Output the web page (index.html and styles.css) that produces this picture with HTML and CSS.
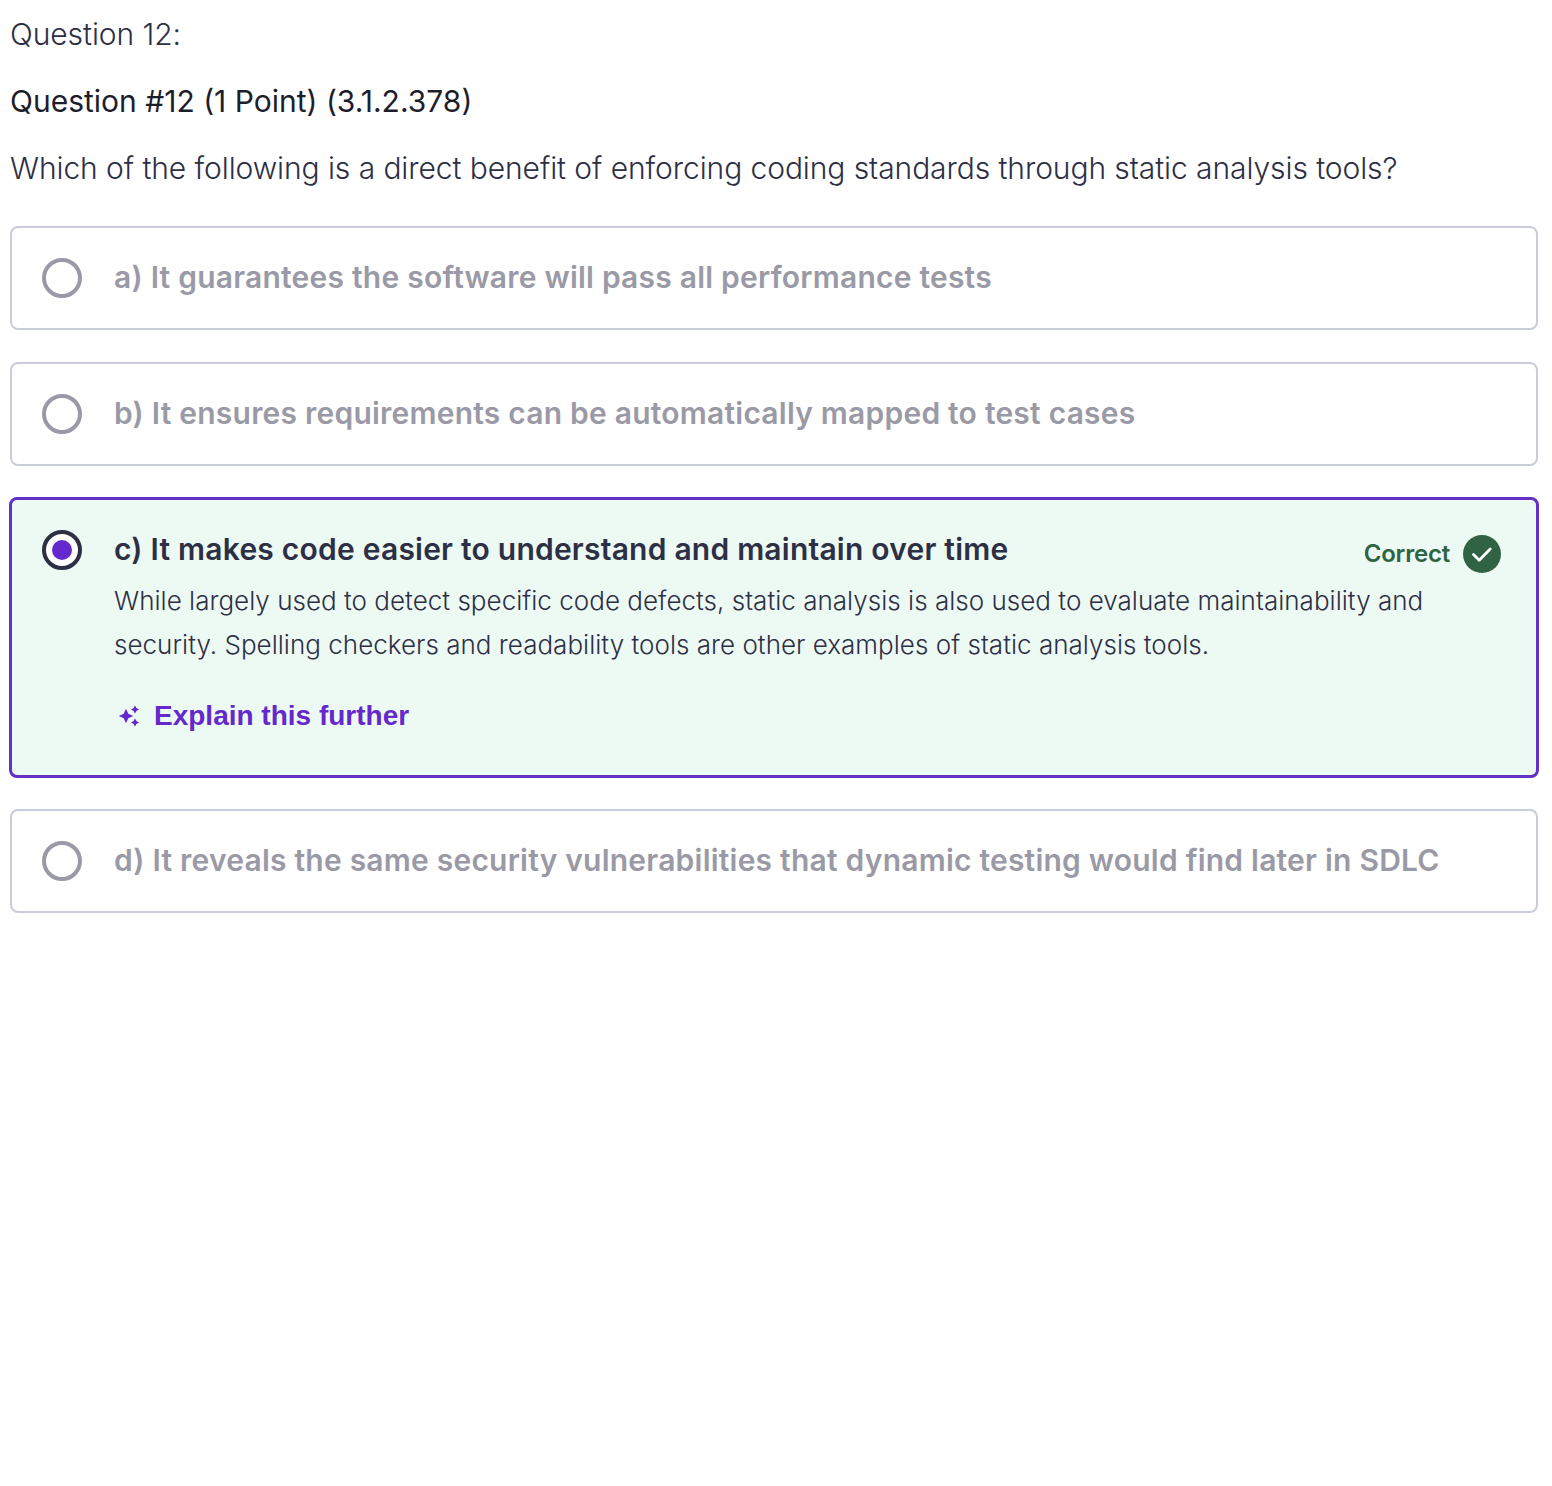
FILE: index.html
```html
<!DOCTYPE html>
<html lang="en">
<head>
<meta charset="utf-8">
<title>Question 12</title>
<link rel="stylesheet" href="styles.css">
</head>
<body>
<main class="quiz">
  <p class="label">Question 12:</p>
  <p class="meta">Question #12 (1 Point) (3.1.2.378)</p>
  <p class="prompt">Which of the following is a direct benefit of enforcing coding standards through static analysis tools?</p>
  <ul class="options">
    <li class="option">
      <span class="radio"></span>
      <span class="option-text muted">a) It guarantees the software will pass all performance tests</span>
    </li>
    <li class="option">
      <span class="radio"></span>
      <span class="option-text muted">b) It ensures requirements can be automatically mapped to test cases</span>
    </li>
    <li class="option option-selected">
      <span class="radio radio-selected"><span class="radio-dot"></span></span>
      <div class="answer">
        <div class="answer-head">
          <span class="option-text strong">c) It makes code easier to understand and maintain over time</span>
          <span class="status">Correct
            <svg class="status-icon" viewBox="0 0 38 38" aria-hidden="true"><circle cx="19" cy="19" r="19" fill="#2f6343"/><path d="M10.500 19.500l5.700 5.700 11-11.200" fill="none" stroke="#fff" stroke-width="2.800" stroke-linecap="round" stroke-linejoin="round"/></svg>
          </span>
        </div>
        <p class="explanation">While largely used to detect specific code defects, static analysis is also used to evaluate maintainability and security. Spelling checkers and readability tools are other examples of static analysis tools.</p>
        <a class="explain" href="#">
          <svg class="spark" viewBox="0 0 22 22" aria-hidden="true"><path d="M8 3.800l2.300 4.900 4.900 2.300-4.900 2.300L8 18.200l-2.300-4.900L.8 11l4.900-2.300z M17 .5l1.400 2.600 2.600 1.400-2.600 1.400L17 8.500l-1.400-2.600L13 4.500l2.600-1.400z M17 13.500l1.400 2.600 2.600 1.400-2.600 1.400L17 21.500l-1.400-2.600-2.600-1.400 2.600-1.400z" fill="#6428cc"/></svg>
          Explain this further
        </a>
      </div>
    </li>
    <li class="option">
      <span class="radio"></span>
      <span class="option-text muted">d) It reveals the same security vulnerabilities that dynamic testing would find later in SDLC</span>
    </li>
  </ul>
</main>
</body>
</html>
```
FILE: styles.css
```css
* { box-sizing: border-box; }
html, body { margin: 0; background: #fff; }
body { font-family: "Inter", "Liberation Sans", sans-serif; color: #2d2f45; }
.quiz { padding: 12px 14px 0 10px; min-height: 1486px; }
.label, .meta, .prompt { margin: 0; font-size: 30px; line-height: 44px; }
.label { font-weight: 300; letter-spacing: -0.07px; color: #2d2f45; }
.meta { margin-top: 23px; font-weight: 400; letter-spacing: 0; color: #1d1e2c; }
.prompt { margin-top: 23px; font-weight: 300; letter-spacing: -0.08px; }
.options { list-style: none; margin: 36px 0 0; padding: 0; display: flex; flex-direction: column; gap: 32px; }
.option { display: flex; align-items: flex-start; gap: 32px; padding: 30px; min-height: 103.500px; border: 2px solid #c9ccd9; border-radius: 8px; background: #fff; }
.option-selected { margin: -1px -1px -1px; padding: 30px 33px 39px 30px; border: 3px solid #6431c6; background: #edfaf4; }
.radio { flex: none; display: flex; align-items: center; justify-content: center; width: 40px; height: 40px; border: 4px solid #9a9aa6; border-radius: 50%; background: #fff; }
.radio-selected { border-color: #2d2f45; }
.radio-dot { width: 20px; height: 20px; border-radius: 50%; background: #6428cc; }
.option-text { margin-top: -1px; font-size: 30px; line-height: 40px; font-weight: 600; letter-spacing: 0.22px; }
.muted { color: #9a9aa6; }
.strong { color: #2d2f45; }
.answer { flex: 1; min-width: 0; }
.answer-head { display: flex; justify-content: space-between; align-items: flex-start; }
.status { display: flex; align-items: center; gap: 13px; margin: 5px 2px 0 0; font-size: 24px; line-height: 38px; font-weight: 600; letter-spacing: -0.2px; color: #2f6343; }
.status-icon { width: 38px; height: 38px; }
.explanation { margin: 6px 0 0; font-size: 26px; line-height: 44px; font-weight: 300; letter-spacing: 0.02px; color: #2d2f45; }
.explain { display: inline-flex; align-items: center; gap: 14px; margin: 29px 0 0 4px; font-family: "Liberation Sans", sans-serif; font-size: 28px; line-height: 40px; font-weight: 700; color: #6428cc; text-decoration: none; }
.spark { width: 22px; height: 22px; }
```
